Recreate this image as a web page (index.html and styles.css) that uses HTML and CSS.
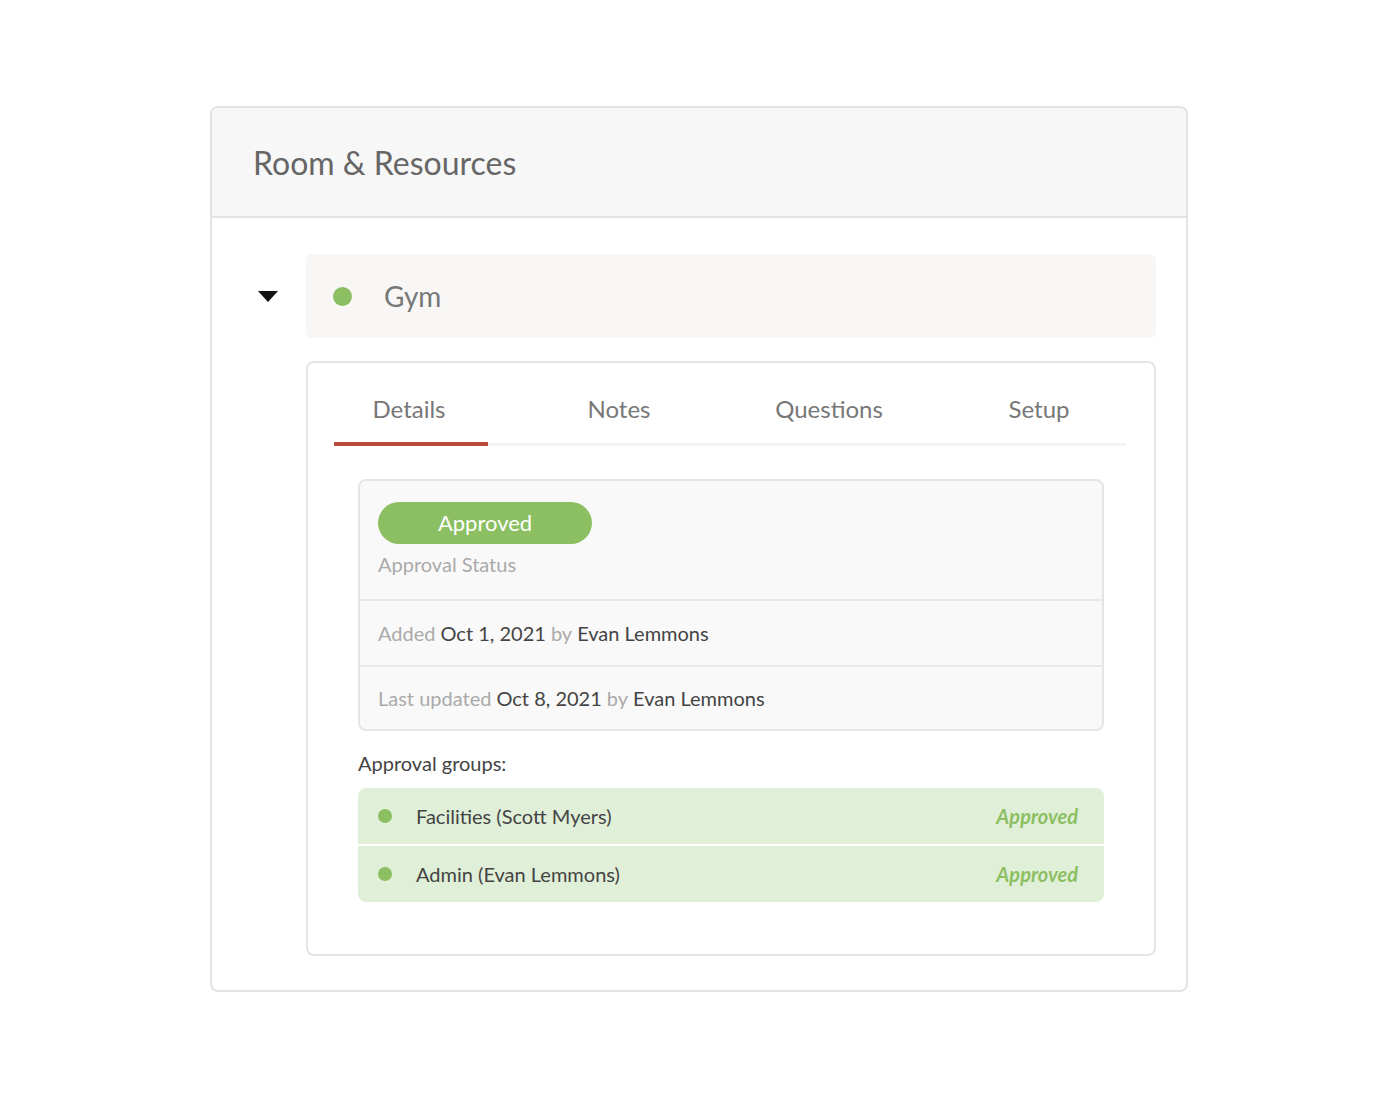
FILE: index.html
```html
<!DOCTYPE html>
<html>
<head>
<meta charset="utf-8">
<link rel="stylesheet" href="styles.css">
</head>
<body>
<div class="page">
  <div class="card">
    <div class="card-header">
      <h1 class="card-title">Room &amp; Resources</h1>
    </div>
    <div class="card-body">
      <div class="resource-row">
        <span class="caret"></span>
        <div class="resource-bar">
          <span class="dot dot-lg"></span>
          <span class="resource-name">Gym</span>
        </div>
      </div>
      <div class="panel">
        <div class="tabs">
          <div class="tab active">Details</div>
          <div class="tab">Notes</div>
          <div class="tab">Questions</div>
          <div class="tab">Setup</div>
        </div>
        <div class="details">
          <div class="details-status">
            <span class="pill">Approved</span>
            <div class="muted status-label">Approval Status</div>
          </div>
          <div class="details-row"><span class="muted">Added</span> Oct 1, 2021 <span class="muted">by</span> Evan Lemmons</div>
          <div class="details-row"><span class="muted">Last updated</span> Oct 8, 2021 <span class="muted">by</span> Evan Lemmons</div>
        </div>
        <div class="groups-title">Approval groups:</div>
        <div class="groups">
          <div class="group">
            <span class="dot dot-sm"></span>
            <span class="group-name">Facilities (Scott Myers)</span>
            <span class="group-status">Approved</span>
          </div>
          <div class="group">
            <span class="dot dot-sm"></span>
            <span class="group-name">Admin (Evan Lemmons)</span>
            <span class="group-status">Approved</span>
          </div>
        </div>
      </div>
    </div>
  </div>
</div>
</body>
</html>
```
FILE: styles.css
```css
* { box-sizing: border-box; }
html, body { margin: 0; padding: 0; background: #fff; }
body { font-family: Lato, "Open Sans", sans-serif; color: #444; }
.page { padding: 106px 0 0 210px; }
.card {
  width: 978px;
  border: 2px solid #e3e3e3;
  border-radius: 8px;
  overflow: hidden;
  background: #fff;
}
.card-header {
  background: #f7f7f7;
  border-bottom: 2px solid #e3e3e3;
  height: 110px;
  display: flex;
  align-items: center;
  padding-left: 41px;
}
.card-title {
  margin: 0;
  font-weight: 400;
  font-size: 32px;
  color: #666;
}
.card-body { padding: 36px 30px 34px 46px; }
.resource-row { display: flex; align-items: center; }
.caret {
  width: 0; height: 0;
  border-left: 10px solid transparent;
  border-right: 10px solid transparent;
  border-top: 11px solid #111;
  margin-right: 28px;
}
.resource-bar {
  flex: 1;
  height: 84px;
  background: #f8f7f6;
  border-radius: 6px;
  display: flex;
  align-items: center;
  padding-left: 27px;
}
.dot { display: inline-block; border-radius: 50%; background: #8cbf62; flex: none; }
.dot-lg { width: 19px; height: 19px; }
.dot-sm { width: 14px; height: 14px; }
.resource-name { font-size: 28px; color: #777; margin-left: 32px; }
.panel {
  margin: 23px 0 0 48px;
  border: 2px solid #e5e5e5;
  border-radius: 8px;
  padding: 31px 28px 52px 26px;
}
.tabs {
  display: flex;
  gap: 56px;
  border-bottom: 3px solid #f5f4f2;
}
.tab {
  width: 154px;
  text-align: center;
  font-size: 24px;
  color: #777;
  padding: 0 4px 19px 0;
  margin-bottom: -3px;
  border-bottom: 4px solid transparent;
}
.tab.active { border-bottom-color: #b84d3c; }
.details {
  margin: 33px 22px 0 24px;
  border: 2px solid #e5e5e5;
  border-radius: 8px;
  background: #f9f9f9;
}
.details-status { padding: 21px 18px 23px; border-bottom: 2px solid #e8e8e8; }
.pill {
  display: inline-block;
  width: 214px;
  height: 42px;
  line-height: 42px;
  border-radius: 21px;
  background: #8cbf62;
  color: #fff;
  font-size: 22px;
  text-align: center;
}
.status-label { font-size: 20px; margin-top: 8px; }
.muted { color: #aaa; }
.details-row {
  font-size: 20px;
  color: #444;
  height: 64px;
  display: flex;
  align-items: center;
  gap: 5px;
  padding-left: 18px;
}
.details-row + .details-row { border-top: 2px solid #e8e8e8; }
.groups-title { margin: 20px 0 0 24px; font-size: 20px; color: #444; }
.groups {
  margin: 13px 22px 0 24px;
  border-radius: 8px;
  overflow: hidden;
  display: flex;
  flex-direction: column;
  gap: 2px;
}
.group {
  background: #e0efd8;
  height: 56px;
  display: flex;
  align-items: center;
  padding: 0 26px 0 20px;
}
.group-name { font-size: 20px; color: #444; margin-left: 24px; flex: 1; }
.group-status { font-size: 20px; font-style: italic; font-weight: 700; color: #8cbf62; }
```
